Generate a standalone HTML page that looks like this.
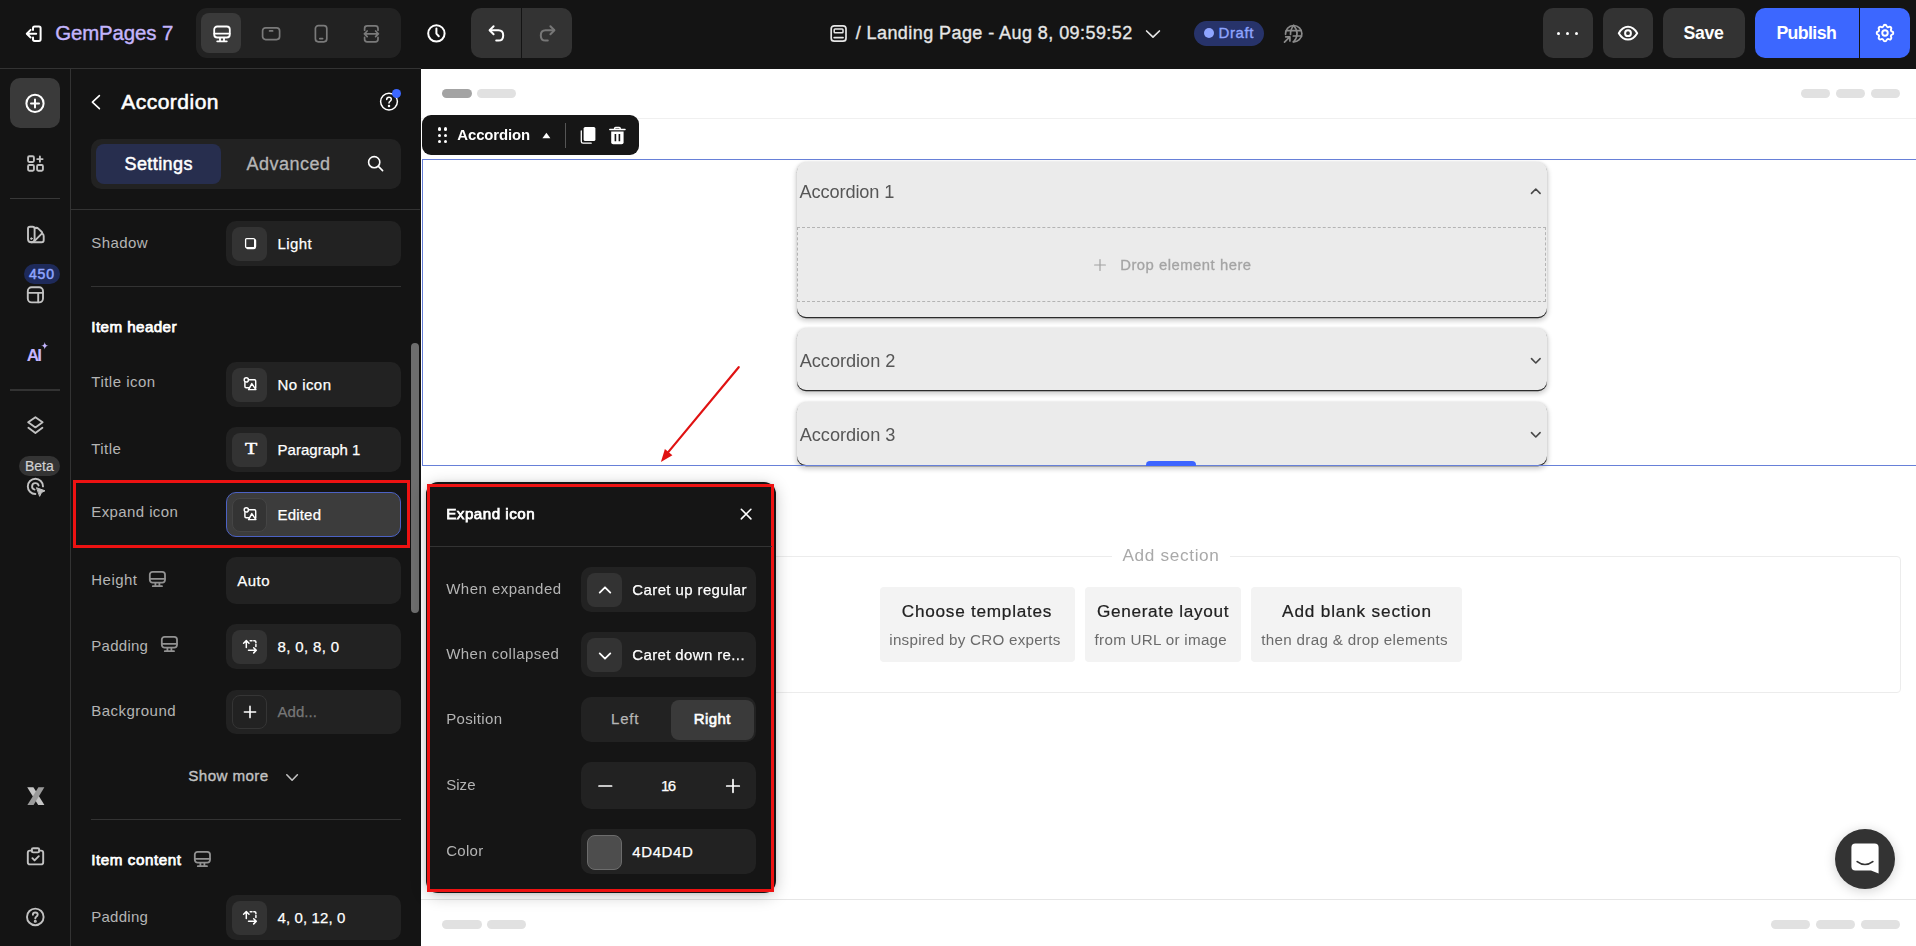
<!DOCTYPE html>
<html lang="en">
<head>
<meta charset="utf-8">
<title>GemPages 7 - Accordion</title>
<style>
*{box-sizing:border-box;margin:0;padding:0}
html,body{width:1916px;height:946px;overflow:hidden;background:#141414;font-family:"Liberation Sans",Arial,sans-serif;color:#fff}
.abs{position:absolute}
#app{position:relative;width:1916px;height:946px;overflow:hidden;background:#141414}
svg{display:block;overflow:visible}
.t{position:absolute;white-space:nowrap;line-height:1}
/* top bar */
#top{position:absolute;left:0;top:0;width:1916px;height:68px;background:#141414}
#topline{position:absolute;left:0;top:68px;width:421px;height:1px;background:#333}
.tbtn{position:absolute;top:8px;height:50px;border-radius:10px;background:#333}
/* rail */
#rail{position:absolute;left:0;top:69px;width:70px;height:877px;background:#141414}
#railline{position:absolute;left:70px;top:69px;width:1px;height:877px;background:#333}
/* panel */
#panel{position:absolute;left:71px;top:69px;width:349px;height:877px;background:#141414}
.lbl{position:absolute;left:91px;font-size:15px;color:#b8b8b8;white-space:nowrap;line-height:1}
.fld{position:absolute;left:226px;width:175px;height:44px;border-radius:10px;background:#232323}
.ibox{position:absolute;left:6px;top:5px;width:35px;height:34px;border-radius:8px;background:#333}
.fld .v{position:absolute;left:51px;top:14px;font-size:15px;color:#fff;white-space:nowrap;line-height:1}
.hr{position:absolute;left:91px;width:310px;height:1px;background:#333}
/* canvas */
#canvas{position:absolute;left:421px;top:69px;width:1495px;height:877px;background:#fff}
.pill{position:absolute;height:10px;border-radius:5px;background:#e3e3e3}
.acc{position:absolute;left:797px;width:749px;background:#ebebeb;border-radius:9px;border-bottom:2px solid #2a2a2a;box-shadow:0 3px 6px rgba(0,0,0,.22),0 0 3px rgba(0,0,0,.12)}
.acct{position:absolute;left:800px;font-size:19.5px;color:#4f4f4f;white-space:nowrap;line-height:1}
/* popup */
#pop{position:absolute;left:427px;top:483px;width:348px;height:410px;background:#141414;border:3px solid #e60012;border-radius:7px;box-shadow:0 4px 18px rgba(0,0,0,.25)}
.plbl{position:absolute;left:446px;font-size:15px;color:#b8b8b8;white-space:nowrap;line-height:1}
.pfld{position:absolute;left:581px;width:175px;height:44px;border-radius:10px;background:#232323}
</style>
</head>
<body>
<div id="app">

<!-- ================= TOP BAR ================= -->
<div id="top"></div>
<!-- exit icon -->
<svg class="abs" style="left:24px;top:23px" width="20" height="21" viewBox="0 0 20 21" fill="none" stroke="#fff" stroke-width="2" stroke-linecap="round" stroke-linejoin="round">
  <path d="M9 7V5.2Q9 3.6 10.6 3.6H15Q16.6 3.6 16.6 5.2V16.3Q16.6 17.9 15 17.9H10.6Q9 17.9 9 16.3V14.5"/>
  <path d="M12.2 10.7H3.2M6.6 6.9L2.8 10.7L6.6 14.5"/>
</svg>
<div class="t" style="left:55.2px;top:23px;font-size:20.4px;color:#c4b5fd;letter-spacing:-0.09px;-webkit-text-stroke:0.4px #c4b5fd;">GemPages 7</div>

<!-- device group -->
<div class="abs" style="left:196px;top:8px;width:205px;height:50px;border-radius:11px;background:#222"></div>
<div class="abs" style="left:201px;top:13px;width:40px;height:40px;border-radius:8px;background:#3a3a3a"></div>
<!-- desktop -->
<svg class="abs" style="left:211px;top:23px" width="22" height="22" viewBox="0 0 22 22" fill="none" stroke="#fff" stroke-width="1.8" stroke-linecap="round" stroke-linejoin="round">
  <rect x="3.2" y="3.5" width="15.6" height="11" rx="3"/>
  <path d="M3.4 10.6H18.6M9 14.8V18M13 14.8V18M6.2 18.3H15.8"/>
</svg>
<!-- tablet -->
<svg class="abs" style="left:260px;top:23px" width="22" height="22" viewBox="0 0 22 22" fill="none" stroke="#7a7a7a" stroke-width="1.7" stroke-linecap="round" stroke-linejoin="round">
  <rect x="2.6" y="4.8" width="17" height="11.8" rx="3"/>
  <path d="M9.6 7.9H12.6"/>
</svg>
<!-- mobile -->
<svg class="abs" style="left:310px;top:23px" width="22" height="22" viewBox="0 0 22 22" fill="none" stroke="#7a7a7a" stroke-width="1.7" stroke-linecap="round" stroke-linejoin="round">
  <rect x="5.4" y="2.6" width="11.4" height="16.2" rx="3"/>
  <path d="M9.8 15.6H12.6"/>
</svg>
<!-- fit -->
<svg class="abs" style="left:360px;top:23px" width="22" height="22" viewBox="0 0 22 22" fill="none" stroke="#7a7a7a" stroke-width="1.7" stroke-linecap="round" stroke-linejoin="round">
  <path d="M4.6 7.2V5.4Q4.6 2.8 7.2 2.8H15.4Q18 2.8 18 5.4V7.2M4.6 14.4V16.2Q4.6 18.8 7.2 18.8H15.4Q18 18.8 18 16.2V14.4"/>
  <path d="M4.4 10.8H18.4M7.2 8L4.4 10.8L7.2 13.6M15.6 8L18.4 10.8L15.6 13.6"/>
</svg>
<!-- clock -->
<svg class="abs" style="left:425px;top:22px" width="23" height="23" viewBox="0 0 23 23" fill="none" stroke="#fff" stroke-width="2" stroke-linecap="round" stroke-linejoin="round">
  <circle cx="11.4" cy="11.4" r="8.2"/>
  <path d="M11.4 6.6V11.6L13.8 14.2"/>
</svg>
<!-- undo/redo -->
<div class="abs" style="left:471px;top:8px;width:101px;height:50px;border-radius:10px;background:#333"></div>
<div class="abs" style="left:521px;top:8px;width:1px;height:50px;background:#141414"></div>
<svg class="abs" style="left:485px;top:22px" width="23" height="23" viewBox="0 0 23 23" fill="none" stroke="#fff" stroke-width="2" stroke-linecap="round" stroke-linejoin="round">
  <path d="M8.6 4.2L4.6 8.2L8.6 12.2"/>
  <path d="M5 8.2H13.4Q18.2 8.2 18.2 13.4Q18.2 18.6 13.4 18.6H11.2"/>
</svg>
<svg class="abs" style="left:536px;top:22px" width="23" height="23" viewBox="0 0 23 23" fill="none" stroke="#777" stroke-width="2" stroke-linecap="round" stroke-linejoin="round">
  <path d="M14.4 4.2L18.4 8.2L14.4 12.2"/>
  <path d="M18 8.2H9.6Q4.8 8.2 4.8 13.4Q4.8 18.6 9.6 18.6H11.8"/>
</svg>

<!-- center title -->
<svg class="abs" style="left:828px;top:23px" width="21" height="21" viewBox="0 0 21 21" fill="none" stroke="#e6e6e6" stroke-width="1.700" stroke-linecap="round" stroke-linejoin="round">
  <rect x="3.200" y="2.800" width="14.800" height="15.400" rx="3"/>
  <rect x="6.200" y="5.900" width="8.800" height="3.800" rx="0.800" stroke-width="1.500"/>
  <path d="M6.200 14.600H15" stroke-width="1.800"/>
</svg>
<div class="t" style="left:855.7px;top:24px;font-size:18px;color:#e6e6e6;letter-spacing:0.43px;-webkit-text-stroke:0.35px #e6e6e6;">/ Landing Page - Aug 8, 09:59:52</div>
<svg class="abs" style="left:1145px;top:28px" width="16" height="12" viewBox="0 0 16 12" fill="none" stroke="#e6e6e6" stroke-width="1.7" stroke-linecap="round" stroke-linejoin="round"><path d="M1.6 3L8 9.2L14.4 3"/></svg>
<!-- draft pill -->
<div class="abs" style="left:1194px;top:21px;width:70px;height:25px;border-radius:12.5px;background:#27336a"></div>
<div class="abs" style="left:1203.700px;top:28px;width:10.200px;height:10.200px;border-radius:5.100px;background:#8fa5ff"></div>
<div class="t" style="left:1218.5px;top:25px;font-size:15px;color:#8fa5ff;letter-spacing:0.6px;-webkit-text-stroke:0.35px #8fa5ff;">Draft</div>
<!-- globe -->
<svg class="abs" style="left:1282px;top:22px" width="23" height="23" viewBox="0 0 23 23" fill="none" stroke="#8a8a8a" stroke-width="1.700" stroke-linecap="round" stroke-linejoin="round">
  <path d="M3.500 12.300A8.200 8.200 0 1 1 11.200 19.900"/>
  <path d="M4.400 8.600H19.200M11.300 14H19.600"/>
  <path d="M11.700 3.500Q8.400 7.200 8.500 12.400M11.700 3.500Q15.100 7.500 15 11.700Q14.900 16.400 11.700 19.700"/>
  <path d="M2.500 20.200L7.500 15.200M3.700 14.800H7.900V19"/>
</svg>

<!-- right buttons -->
<div class="tbtn" style="left:1543px;width:50px"></div>
<div class="abs" style="left:1556.700px;top:31.700px;width:3px;height:3px;border-radius:2px;background:#fff"></div>
<div class="abs" style="left:1566.200px;top:31.700px;width:3px;height:3px;border-radius:2px;background:#fff"></div>
<div class="abs" style="left:1574.700px;top:31.700px;width:3px;height:3px;border-radius:2px;background:#fff"></div>
<div class="tbtn" style="left:1603px;width:50px"></div>
<svg class="abs" style="left:1616px;top:22px" width="24" height="22" viewBox="0 0 24 22" fill="none" stroke="#fff" stroke-width="2" stroke-linecap="round" stroke-linejoin="round">
  <path d="M2.8 11.2Q6.6 4.8 12 4.8Q17.4 4.8 21.2 11.2Q17.4 17.6 12 17.6Q6.600 17.6 2.8 11.2Z"/>
  <circle cx="12" cy="11.2" r="2.9"/>
</svg>
<div class="tbtn" style="left:1663px;width:82px"></div>
<div class="t" style="left:1683.5px;top:25px;font-size:17.7px;color:#fff;font-weight:bold;letter-spacing:-0.31px;">Save</div>
<div class="abs" style="left:1755px;top:8px;width:104px;height:50px;border-radius:10px 0 0 10px;background:#3c67ff"></div>
<div class="abs" style="left:1860px;top:8px;width:50px;height:50px;border-radius:0 10px 10px 0;background:#3c67ff"></div>
<div class="t" style="left:1776.4px;top:25px;font-size:17.7px;color:#fff;font-weight:bold;letter-spacing:-0.59px;">Publish</div>
<svg class="abs" style="left:1874px;top:22px" width="22" height="22" viewBox="0 0 24 24" fill="none" stroke="#fff" stroke-width="2.1" stroke-linecap="round" stroke-linejoin="round">
  <path d="M10.3 4.3c.4-1.8 3-1.8 3.4 0a1.7 1.7 0 0 0 2.600 1.100c1.500-.9 3.300.8 2.400 2.400a1.700 1.700 0 0 0 1 2.600c1.800.4 1.800 3 0 3.400a1.700 1.700 0 0 0-1 2.600c.9 1.500-.8 3.300-2.400 2.400a1.700 1.700 0 0 0-2.600 1c-.4 1.800-3 1.800-3.400 0a1.700 1.700 0 0 0-2.600-1c-1.500.9-3.300-.8-2.400-2.400a1.700 1.700 0 0 0-1-2.600c-1.800-.4-1.800-3 0-3.400a1.700 1.700 0 0 0 1-2.600c-.9-1.500.8-3.300 2.400-2.400 1 .6 2.300.1 2.600-1.100z"/>
  <circle cx="12" cy="12" r="3"/>
</svg>


<!-- ================= RAIL ================= -->
<div id="rail"></div>
<div id="railline"></div>
<div id="topline"></div>
<div class="abs" style="left:10px;top:78px;width:50px;height:50px;border-radius:10px;background:#3a3a3a"></div>
<svg class="abs" style="left:24px;top:92px" width="22" height="22" viewBox="0 0 22 22" fill="none" stroke="#fff" stroke-width="2" stroke-linecap="round"><circle cx="11" cy="11.400" r="8.600"/><path d="M11 7.400V15.400M7 11.400H15"/></svg>
<!-- widgets -->
<svg class="abs" style="left:25px;top:153px" width="22" height="22" viewBox="0 0 22 22" fill="none" stroke="#c2c2c2" stroke-width="1.900" stroke-linecap="round" stroke-linejoin="round">
  <rect x="3.100" y="3.300" width="5.800" height="5.700" rx="1.200"/><rect x="3.100" y="12" width="5.800" height="5.700" rx="1.200"/><rect x="12.100" y="12" width="5.800" height="5.700" rx="1.200"/>
  <path d="M14.900 3.500V8.800M12.200 6.100H17.600"/>
</svg>
<div class="abs" style="left:10px;top:198px;width:50px;height:1px;background:#383838"></div>
<!-- palette -->
<svg class="abs" style="left:25px;top:224px" width="22" height="22" viewBox="0 0 22 22" fill="none" stroke="#c2c2c2" stroke-width="1.900" stroke-linecap="round" stroke-linejoin="round">
  <path d="M5 2.800H7.600Q9.600 2.800 9.600 4.800V14.900Q9.600 18.200 6.300 18.200Q3 18.200 3 14.900V4.800Q3 2.800 5 2.800Z"/>
  <path d="M9.800 4L11.200 3.800Q12.600 3.800 13.600 4.800L16.800 8Q17.600 8.800 16.800 9.600L9.600 16.800"/>
  <path d="M17.400 9.600Q18.700 10.500 18.700 12V16.200Q18.700 18.200 16.700 18.200H6.300"/>
  <circle cx="6.400" cy="14.600" r="0.900" fill="#c2c2c2" stroke-width="0.800"/>
</svg>
<div class="abs" style="left:24px;top:264px;width:36.200px;height:20px;border-radius:10px;background:#1e2a5a"></div>
<div class="t" style="left:28.9px;top:267px;font-size:14px;color:#8fa5ff;letter-spacing:0.92px;-webkit-text-stroke:0.5px #8fa5ff;">450</div>
<!-- layout -->
<svg class="abs" style="left:25px;top:284px" width="22" height="22" viewBox="0 0 22 22" fill="none" stroke="#c2c2c2" stroke-width="1.900" stroke-linecap="round" stroke-linejoin="round">
  <rect x="2.800" y="3.200" width="15.200" height="15.200" rx="3.800"/><path d="M3 8.900H17.800M13.200 8.900V18.200"/>
</svg>
<!-- AI -->
<div class="t" style="left:26.7px;top:347px;font-size:17px;color:#c4b5fd;font-weight:bold;letter-spacing:-1.6px;">AI</div>
<svg class="abs" style="left:40.500px;top:342px" width="7.500" height="7.500" viewBox="0 0 10 10"><path d="M5 0Q5.400 4.600 10 5Q5.400 5.400 5 10Q4.600 5.400 0 5Q4.600 4.600 5 0Z" fill="#c4b5fd"/></svg>
<div class="abs" style="left:10px;top:389px;width:50px;height:2px;background:#333"></div>
<!-- layers -->
<svg class="abs" style="left:25px;top:414px" width="22" height="22" viewBox="0 0 22 22" fill="none" stroke="#c2c2c2" stroke-width="1.900" stroke-linecap="round" stroke-linejoin="round">
  <path d="M10.400 3.200L3.200 8.200L10.400 13.400L17.600 8.200Z"/><path d="M3.400 13.800L10.400 19L17.400 13.800"/>
</svg>
<div class="abs" style="left:19.300px;top:456px;width:41px;height:20px;border-radius:10px;background:#343434"></div>
<div class="t" style="left:25px;top:459px;font-size:14px;color:#d0d0d0;-webkit-text-stroke:0.2px #d0d0d0;">Beta</div>
<!-- target cursor -->
<svg class="abs" style="left:25px;top:476px" width="22" height="22" viewBox="0 0 22 22" fill="none" stroke="#c2c2c2" stroke-width="1.900" stroke-linecap="round" stroke-linejoin="round">
  <path d="M18 10.400A7.600 7.600 0 1 0 10.400 18"/>
  <path d="M13.600 9.600A3.300 3.300 0 1 0 9.600 13.600"/>
  <path d="M11.800 11.800L20 14.800L16.500 16.500L14.800 20Z" fill="#c2c2c2" stroke-width="1"/>
</svg>
<!-- X logo -->
<svg class="abs" style="left:26px;top:786px" width="20" height="20" viewBox="0 0 20 20">
  <path d="M1.200 1.200H7.400L18.400 19H12.200Z" fill="#c6c6c6"/>
  <path d="M12.400 1.200H18.400L7.600 19H1.400Z" fill="#9a9a9a"/>
</svg>
<!-- clipboard check -->
<svg class="abs" style="left:25px;top:846px" width="22" height="22" viewBox="0 0 22 22" fill="none" stroke="#c2c2c2" stroke-width="1.900" stroke-linecap="round" stroke-linejoin="round">
  <path d="M6.800 4.600H5Q2.800 4.600 2.800 6.800V16.200Q2.800 18.400 5 18.400H16Q18.200 18.400 18.200 16.200V6.800Q18.200 4.600 16 4.600H14.200"/>
  <rect x="6.800" y="2.200" width="7.400" height="4.200" rx="1.400"/>
  <path d="M7.400 12.200L9.600 14.400L13.800 10.200"/>
</svg>
<!-- help -->
<svg class="abs" style="left:24px;top:906px" width="22" height="22" viewBox="0 0 22 22" fill="none" stroke="#c2c2c2" stroke-width="1.900" stroke-linecap="round" stroke-linejoin="round">
  <circle cx="11.300" cy="10.900" r="8.300"/>
  <path d="M8.900 8.800Q8.900 6.500 11.300 6.500Q13.700 6.500 13.700 8.600Q13.700 10 12.300 10.700Q11.300 11.300 11.300 12.400"/>
  <circle cx="11.300" cy="15.200" r="0.600" fill="#c9c9c9"/>
</svg>


<!-- ================= PANEL ================= -->
<div id="panel"></div>
<svg class="abs" style="left:88px;top:93px" width="16" height="18" viewBox="0 0 16 18" fill="none" stroke="#fff" stroke-width="1.6" stroke-linecap="round" stroke-linejoin="round"><path d="M11.400 2.600L4.400 9.100L11.400 15.600"/></svg>
<div class="t" style="left:121.2px;top:91px;font-size:21px;color:#fff;letter-spacing:0.49px;-webkit-text-stroke:0.55px #fff;">Accordion</div>
<svg class="abs" style="left:378px;top:91px" width="22" height="22" viewBox="0 0 22 22" fill="none" stroke="#fff" stroke-width="1.5" stroke-linecap="round" stroke-linejoin="round"><circle cx="11" cy="10.600" r="8.400"/><path d="M8.700 8.600Q8.700 6.300 11 6.300Q13.300 6.300 13.300 8.300Q13.300 9.700 12 10.400Q11 11 11 12"/><circle cx="11" cy="14.900" r="0.500" fill="#fff"/></svg>
<div class="abs" style="left:391.8px;top:88.8px;width:9px;height:9px;background:#3c67ff;border-radius:4.5px;"></div>
<div class="abs" style="left:91px;top:139px;width:310px;height:49.5px;background:#222;border-radius:10px;"></div>
<div class="abs" style="left:96px;top:144px;width:125px;height:40px;background:#272e4e;border-radius:8px;"></div>
<div class="t" style="left:124.5px;top:155px;font-size:18px;color:#fff;letter-spacing:0.42px;-webkit-text-stroke:0.5px #fff;">Settings</div>
<div class="t" style="left:246.5px;top:155px;font-size:18px;color:#b6b6b6;letter-spacing:0.49px;-webkit-text-stroke:0.3px #b6b6b6;">Advanced</div>
<svg class="abs" style="left:365px;top:153px" width="22" height="22" viewBox="0 0 22 22" fill="none" stroke="#fff" stroke-width="1.6" stroke-linecap="round" stroke-linejoin="round"><circle cx="9.200" cy="9.200" r="5.600"/><path d="M13.400 13.400L17.600 17.600"/></svg>
<div class="abs" style="left:71px;top:209px;width:349px;height:1px;background:#333;"></div>
<div class="t" style="left:91.3px;top:235px;font-size:15px;color:#b4b4b4;letter-spacing:0.4px;">Shadow</div>
<div class="abs" style="left:226px;top:221px;width:175px;height:44.5px;background:#222;border-radius:10px;"></div>
<div class="abs" style="left:232px;top:226.5px;width:35px;height:34px;background:#333;border-radius:8px;"></div>
<svg class="abs" style="left:242px;top:235px" width="17" height="17" viewBox="0 0 17 17" fill="none" stroke="#fff" stroke-width="1.5" stroke-linecap="round" stroke-linejoin="round"><path d="M4.600 3.600H11.400Q12.800 3.600 12.800 5V11.400Q12.800 12.800 11.400 12.800H5Q3.600 12.800 3.600 11.400V4.600Q3.600 3.600 4.600 3.600Z" stroke-width="1.300"/><path d="M13.100 5.400V11.400Q13.100 13.100 11.400 13.100H5.400" stroke-width="2.200"/></svg>
<div class="t" style="left:277.5px;top:236px;font-size:15px;color:#fff;letter-spacing:0.42px;-webkit-text-stroke:0.25px #fff;">Light</div>
<div class="abs" style="left:91px;top:286px;width:310px;height:1px;background:#333;"></div>
<div class="t" style="left:91.3px;top:319px;font-size:15.2px;color:#fff;letter-spacing:0.42px;-webkit-text-stroke:0.75px #fff;">Item header</div>
<div class="t" style="left:91.3px;top:374px;font-size:15px;color:#b4b4b4;letter-spacing:0.48px;">Title icon</div>
<div class="abs" style="left:226px;top:362px;width:175px;height:44.5px;background:#222;border-radius:10px;"></div>
<div class="abs" style="left:232px;top:367.5px;width:35px;height:34px;background:#333;border-radius:8px;"></div>
<svg class="abs" style="left:241.5px;top:376px" width="16" height="16" viewBox="0 0 16 16" fill="none" stroke="#fff" stroke-width="1.45" stroke-linecap="round" stroke-linejoin="round"><circle cx="4.3" cy="3.9" r="2.1"/><path d="M7 3.8H12.6Q13.700 3.800 13.700 4.900V12M2.900 6.500V10.600Q2.900 11.800 4.100 11.800H6.600"/><path d="M9.800 7.600L6.600 13.600H13.900Z"/></svg>
<div class="t" style="left:277.5px;top:377px;font-size:15px;color:#fff;letter-spacing:0.44px;-webkit-text-stroke:0.25px #fff;">No icon</div>
<div class="t" style="left:91.3px;top:441px;font-size:15px;color:#b4b4b4;letter-spacing:0.43px;">Title</div>
<div class="abs" style="left:226px;top:427px;width:175px;height:44.5px;background:#222;border-radius:10px;"></div>
<div class="abs" style="left:232px;top:432.5px;width:35px;height:34px;background:#333;border-radius:8px;"></div>
<div class="t" style="left:244.7px;top:441px;font-size:16.4px;color:#fff;font-family:'Liberation Serif',serif;-webkit-text-stroke:0.5px #fff;transform:scaleX(1.22);transform-origin:0 0;">T</div>
<div class="t" style="left:277.5px;top:442px;font-size:15px;color:#fff;letter-spacing:0.04px;-webkit-text-stroke:0.25px #fff;">Paragraph 1</div>
<div class="t" style="left:91.3px;top:504px;font-size:15px;color:#b4b4b4;letter-spacing:0.4px;">Expand icon</div>
<div class="abs" style="left:226px;top:492px;width:175px;height:44.5px;background:#3c3c3c;border-radius:10px;border:1px solid #4c62c4;"></div>
<div class="abs" style="left:232px;top:497.5px;width:35px;height:34px;background:#343434;border-radius:8px;border:1px solid #454545;"></div>
<svg class="abs" style="left:241.5px;top:506.3px" width="16" height="16" viewBox="0 0 16 16" fill="none" stroke="#fff" stroke-width="1.45" stroke-linecap="round" stroke-linejoin="round"><circle cx="4.3" cy="3.9" r="2.1"/><path d="M7 3.8H12.6Q13.700 3.800 13.700 4.900V12M2.900 6.500V10.600Q2.900 11.800 4.100 11.800H6.600"/><path d="M9.800 7.600L6.600 13.600H13.900Z"/></svg>
<div class="t" style="left:277.5px;top:507px;font-size:15px;color:#fff;letter-spacing:0.19px;-webkit-text-stroke:0.25px #fff;">Edited</div>
<div class="abs" style="left:73px;top:479.800px;width:336.700px;height:68.200px;border:3.400px solid #ee1212"></div>
<div class="t" style="left:91.3px;top:572px;font-size:15px;color:#b4b4b4;letter-spacing:0.47px;">Height</div>
<svg class="abs" style="left:148px;top:569.6px" width="19" height="19" viewBox="0 0 19 19" fill="none" stroke="#929292" stroke-width="1.8" stroke-linecap="round" stroke-linejoin="round"><rect x="1.800" y="1.800" width="15.200" height="10.800" rx="2.800"/><path d="M2 8.800H16.800M7.400 12.800V15.800M11.400 12.800V15.800M4.800 16.200H14"/></svg>
<div class="abs" style="left:226px;top:557px;width:175px;height:47px;background:#222;border-radius:10px;"></div>
<div class="t" style="left:237.3px;top:573px;font-size:15px;color:#fff;letter-spacing:0.48px;-webkit-text-stroke:0.25px #fff;">Auto</div>
<div class="t" style="left:91.3px;top:638px;font-size:15px;color:#b4b4b4;letter-spacing:0.27px;">Padding</div>
<svg class="abs" style="left:160.4px;top:635.2px" width="19" height="19" viewBox="0 0 19 19" fill="none" stroke="#929292" stroke-width="1.8" stroke-linecap="round" stroke-linejoin="round"><rect x="1.800" y="1.800" width="15.200" height="10.800" rx="2.800"/><path d="M2 8.800H16.800M7.400 12.800V15.800M11.400 12.800V15.800M4.800 16.200H14"/></svg>
<div class="abs" style="left:226px;top:624px;width:175px;height:44.5px;background:#222;border-radius:10px;"></div>
<div class="abs" style="left:232px;top:629.5px;width:35px;height:34px;background:#333;border-radius:8px;"></div>
<svg class="abs" style="left:242px;top:637.8px" width="17" height="17" viewBox="0 0 17 17" fill="none" stroke="#fff" stroke-width="1.5" stroke-linecap="round" stroke-linejoin="round"><path d="M4.300 9.600V2.700M1.600 5.200L4.300 2.500L7 5.200"/><path d="M6.500 12.300H14.200M11.700 9.700L14.300 12.300L11.700 14.900"/><path d="M8.200 2.800H10M11.800 2.800H12.600Q13.900 2.800 13.900 4.100V4.700M13.900 6.600V8.500"/></svg>
<div class="t" style="left:277.5px;top:639px;font-size:15px;color:#fff;letter-spacing:0.35px;-webkit-text-stroke:0.25px #fff;">8, 0, 8, 0</div>
<div class="t" style="left:91.3px;top:703px;font-size:15px;color:#b4b4b4;letter-spacing:0.47px;">Background</div>
<div class="abs" style="left:226px;top:689.5px;width:175px;height:44.5px;background:#222;border-radius:10px;"></div>
<div class="abs" style="left:232px;top:695px;width:35px;height:34px;background:#222;border-radius:8px;border:1px solid #353535;"></div>
<svg class="abs" style="left:242px;top:704px" width="16" height="16" viewBox="0 0 16 16" fill="none" stroke="#fff" stroke-width="1.6" stroke-linecap="round" stroke-linejoin="round"><path d="M8 2.400V13.600M2.400 8H13.600"/></svg>
<div class="t" style="left:277.5px;top:704px;font-size:15px;color:#777;letter-spacing:0.06px;-webkit-text-stroke:0.25px #777;">Add...</div>
<div class="t" style="left:188.3px;top:768px;font-size:15.2px;color:#c2c2c2;letter-spacing:0.38px;-webkit-text-stroke:0.35px #c2c2c2;">Show more</div>
<svg class="abs" style="left:284px;top:770px" width="16" height="14" viewBox="0 0 16 14" fill="none" stroke="#c2c2c2" stroke-width="1.6" stroke-linecap="round" stroke-linejoin="round"><path d="M2.800 4.800L8.100 10.200L13.400 4.800"/></svg>
<div class="abs" style="left:91px;top:819px;width:310px;height:1px;background:#333;"></div>
<div class="t" style="left:91.2px;top:852px;font-size:15.2px;color:#fff;letter-spacing:0.56px;-webkit-text-stroke:0.75px #fff;">Item content</div>
<svg class="abs" style="left:192.6px;top:849.6px" width="19" height="19" viewBox="0 0 19 19" fill="none" stroke="#929292" stroke-width="1.8" stroke-linecap="round" stroke-linejoin="round"><rect x="1.800" y="1.800" width="15.200" height="10.800" rx="2.800"/><path d="M2 8.800H16.800M7.400 12.800V15.800M11.400 12.800V15.800M4.800 16.200H14"/></svg>
<div class="t" style="left:91.2px;top:909px;font-size:15px;color:#b4b4b4;letter-spacing:0.27px;">Padding</div>
<div class="abs" style="left:226px;top:895.3px;width:175px;height:44.5px;background:#222;border-radius:10px;"></div>
<div class="abs" style="left:232px;top:900.8px;width:35px;height:34px;background:#333;border-radius:8px;"></div>
<svg class="abs" style="left:242px;top:909.3px" width="17" height="17" viewBox="0 0 17 17" fill="none" stroke="#fff" stroke-width="1.5" stroke-linecap="round" stroke-linejoin="round"><path d="M4.300 9.600V2.700M1.600 5.200L4.300 2.500L7 5.200"/><path d="M6.500 12.300H14.200M11.700 9.700L14.300 12.300L11.700 14.900"/><path d="M8.200 2.800H10M11.800 2.800H12.600Q13.900 2.800 13.900 4.100V4.700M13.900 6.600V8.500"/></svg>
<div class="t" style="left:277.5px;top:910px;font-size:15px;color:#fff;letter-spacing:0.11px;-webkit-text-stroke:0.25px #fff;">4, 0, 12, 0</div>
<div class="abs" style="left:411px;top:343px;width:8px;height:270px;background:#6e6e6e;border-radius:4px;"></div>

<!-- ================= CANVAS ================= -->
<div id="canvas"></div>
<div class="abs" style="left:0;top:0;width:1916px;height:946px;will-change:transform">
<div class="abs" style="left:441.5px;top:88.5px;width:30px;height:9.5px;background:#a3a3a3;border-radius:5px;"></div>
<div class="abs" style="left:477px;top:88.5px;width:39px;height:9.5px;background:#e1e1e1;border-radius:5px;"></div>
<div class="abs" style="left:1800.5px;top:88.5px;width:29.5px;height:9.5px;background:#e1e1e1;border-radius:5px;"></div>
<div class="abs" style="left:1835.5px;top:88.5px;width:29.5px;height:9.5px;background:#e1e1e1;border-radius:5px;"></div>
<div class="abs" style="left:1870.5px;top:88.5px;width:29.5px;height:9.5px;background:#e1e1e1;border-radius:5px;"></div>
<div class="abs" style="left:421px;top:118px;width:1495px;height:1px;background:#f0f0f0;"></div>
<div class="abs" style="left:796.500px;top:161.5px;width:750px;height:155.2px;background:#ebebeb;border-radius:9px;box-shadow:0 1.200px 0 0 #2b2b2b,0 3px 5px 1px rgba(0,0,0,.2),0 0 3px rgba(0,0,0,.1)"></div>
<div class="abs" style="left:796.500px;top:328.3px;width:750px;height:62.2px;background:#ebebeb;border-radius:9px;box-shadow:0 1.200px 0 0 #2b2b2b,0 3px 5px 1px rgba(0,0,0,.2),0 0 3px rgba(0,0,0,.1)"></div>
<div class="abs" style="left:796.500px;top:402.2px;width:750px;height:62.8px;background:#ebebeb;border-radius:9px;box-shadow:0 1.200px 0 0 #2b2b2b,0 3px 5px 1px rgba(0,0,0,.2),0 0 3px rgba(0,0,0,.1)"></div>
<div class="t" style="left:799.6px;top:183px;font-size:18.2px;color:#565656;letter-spacing:-0.13px;">Accordion 1</div>
<div class="t" style="left:799.7px;top:352px;font-size:18.2px;color:#565656;letter-spacing:-0.04px;">Accordion 2</div>
<div class="t" style="left:799.7px;top:426px;font-size:18.2px;color:#565656;letter-spacing:-0.04px;">Accordion 3</div>
<svg class="abs" style="left:1529px;top:185px" width="14" height="12" viewBox="0 0 14 12" fill="none" stroke="#484848" stroke-width="1.6" stroke-linecap="round" stroke-linejoin="round"><path d="M2.500 8.400L6.800 4L11.100 8.400"/></svg>
<svg class="abs" style="left:1529px;top:355px" width="14" height="12" viewBox="0 0 14 12" fill="none" stroke="#484848" stroke-width="1.6" stroke-linecap="round" stroke-linejoin="round"><path d="M2.500 3.600L6.800 8L11.100 3.600"/></svg>
<svg class="abs" style="left:1529px;top:429.3px" width="14" height="12" viewBox="0 0 14 12" fill="none" stroke="#484848" stroke-width="1.6" stroke-linecap="round" stroke-linejoin="round"><path d="M2.500 3.600L6.800 8L11.100 3.600"/></svg>
<div class="abs" style="left:796.500px;top:227px;width:749.500px;height:74.500px;border:1px dashed #b4b4b4"></div>
<svg class="abs" style="left:1093px;top:257.7px" width="14" height="14" viewBox="0 0 14 14" fill="none" stroke="#a2a2a2" stroke-width="1.2" stroke-linecap="round" stroke-linejoin="round"><path d="M7 1.600V12.400M1.600 7H12.400"/></svg>
<div class="t" style="left:1120.2px;top:258px;font-size:14.8px;color:#a4a4a4;letter-spacing:0.52px;-webkit-text-stroke:0.3px #a4a4a4;">Drop element here</div>
<div class="abs" style="left:422px;top:159px;width:1500px;height:307px;border:1px solid #6780d8"></div>
<div class="abs" style="left:1146px;top:461px;width:50px;height:5px;background:#3c64ff;border-radius:4px 4px 0 0;"></div>
<div class="abs" style="left:422px;top:115.3px;width:216.5px;height:39.6px;background:#161616;border-radius:9px;"></div>
<div class="abs" style="left:437.8px;top:127.4px;width:3.4px;height:3.4px;background:#fff;border-radius:2px;"></div>
<div class="abs" style="left:437.8px;top:133.7px;width:3.4px;height:3.4px;background:#fff;border-radius:2px;"></div>
<div class="abs" style="left:437.8px;top:139.9px;width:3.4px;height:3.4px;background:#fff;border-radius:2px;"></div>
<div class="abs" style="left:444.1px;top:127.4px;width:3.4px;height:3.4px;background:#fff;border-radius:2px;"></div>
<div class="abs" style="left:444.1px;top:133.7px;width:3.4px;height:3.4px;background:#fff;border-radius:2px;"></div>
<div class="abs" style="left:444.1px;top:139.9px;width:3.4px;height:3.4px;background:#fff;border-radius:2px;"></div>
<div class="t" style="left:457.3px;top:128px;font-size:14.9px;color:#fff;font-weight:bold;letter-spacing:-0.1px;">Accordion</div>
<svg class="abs" style="left:542px;top:132px" width="9" height="7" viewBox="0 0 9 7"><path d="M4.400 0.800L8.400 6.300H0.400Z" fill="#fff"/></svg>
<div class="abs" style="left:565px;top:123.2px;width:1.4px;height:25px;background:#555;"></div>
<svg class="abs" style="left:580px;top:126px" width="17" height="19" viewBox="0 0 17 19"><path d="M5.200 1H13.800Q15.400 1 15.400 2.600V13.400Q15.400 15 13.800 15H5.200Q3.600 15 3.600 13.400V2.600Q3.600 1 5.200 1Z" fill="#fff"/><path d="M1.300 4.800V15.400Q1.300 17.200 3.100 17.200H11.200" fill="none" stroke="#fff" stroke-width="1.300" stroke-linecap="round"/></svg>
<svg class="abs" style="left:609px;top:125.500px" width="17" height="19" viewBox="0 0 17 19"><path d="M0.800 3.600H16M5.600 3.400V2.400Q5.600 1.400 6.600 1.400H10.200Q11.200 1.400 11.200 2.400V3.400" fill="none" stroke="#fff" stroke-width="1.500" stroke-linecap="round"/><path d="M2.200 5.400H14.600V16.200Q14.600 18.200 12.600 18.200H4.200Q2.200 18.200 2.200 16.200Z" fill="#fff"/><path d="M6.400 8V15.200M10.400 8V15.200" stroke="#161616" stroke-width="1.600" fill="none"/></svg>
<svg class="abs" style="left:650px;top:360px" width="100" height="110" viewBox="650 360 100 110"><path d="M738.700 367.200L667 453.600" stroke="#e01212" stroke-width="2.200" stroke-linecap="round" fill="none"/><path d="M660.900 462L664.900 449L672.400 455.300Z" fill="#e01212"/></svg>
<div class="abs" style="left:437px;top:556px;width:1463.500px;height:136.500px;border:1px solid #ececec;border-radius:4px"></div>
<div class="abs" style="left:1112px;top:550px;width:118px;height:14px;background:#fff;"></div>
<div class="t" style="left:1122.4px;top:547px;font-size:17.2px;color:#a9a9a9;letter-spacing:0.67px;">Add section</div>
<div class="abs" style="left:879.5px;top:587px;width:195.4px;height:74.5px;background:#f3f3f3;border-radius:4px;"></div>
<div class="t" style="left:901.8px;top:603px;font-size:17.2px;color:#212121;letter-spacing:0.74px;-webkit-text-stroke:0.22px #212121;">Choose templates</div>
<div class="t" style="left:889.3px;top:632px;font-size:15.2px;color:#6b6b6b;letter-spacing:0.25px;">inspired by CRO experts</div>
<div class="abs" style="left:1085.2px;top:587px;width:155.4px;height:74.5px;background:#f3f3f3;border-radius:4px;"></div>
<div class="t" style="left:1097px;top:603px;font-size:17.2px;color:#212121;letter-spacing:0.65px;-webkit-text-stroke:0.22px #212121;">Generate layout</div>
<div class="t" style="left:1094.6px;top:632px;font-size:15.2px;color:#6b6b6b;letter-spacing:0.28px;">from URL or image</div>
<div class="abs" style="left:1251.2px;top:587px;width:211.2px;height:74.5px;background:#f3f3f3;border-radius:4px;"></div>
<div class="t" style="left:1282.1px;top:603px;font-size:17.2px;color:#212121;letter-spacing:0.83px;-webkit-text-stroke:0.22px #212121;">Add blank section</div>
<div class="t" style="left:1261.2px;top:632px;font-size:15.2px;color:#6b6b6b;letter-spacing:0.31px;">then drag &amp; drop elements</div>
<div class="abs" style="left:421px;top:898.5px;width:1495px;height:1px;background:#e6e6e6;"></div>
<div class="abs" style="left:442px;top:919.7px;width:39.5px;height:9.8px;background:#e1e1e1;border-radius:5px;"></div>
<div class="abs" style="left:486.7px;top:919.7px;width:39.5px;height:9.8px;background:#e1e1e1;border-radius:5px;"></div>
<div class="abs" style="left:1771px;top:919.7px;width:39.3px;height:9.8px;background:#e1e1e1;border-radius:5px;"></div>
<div class="abs" style="left:1816px;top:919.7px;width:39.3px;height:9.8px;background:#e1e1e1;border-radius:5px;"></div>
<div class="abs" style="left:1861px;top:919.7px;width:39.3px;height:9.8px;background:#e1e1e1;border-radius:5px;"></div>
<div class="abs" style="left:1835px;top:829px;width:60px;height:60px;background:#333;border-radius:30px;box-shadow:0 2px 12px rgba(0,0,0,.18);"></div>
<svg class="abs" style="left:1850px;top:842px" width="30" height="33" viewBox="0 0 30 33"><path d="M5.400 1.400H24.600Q28.600 1.400 28.600 5.400V31.600L21 28.400H5.400Q1.400 28.400 1.400 24.400V5.400Q1.400 1.400 5.400 1.400Z" fill="#fff"/><path d="M7.200 19.600Q15 25.400 22.800 19.600" stroke="#333" stroke-width="1.700" fill="none" stroke-linecap="round"/></svg>
</div>

<!-- ================= POPUP ================= -->
<div class="abs" style="left:426px;top:482.3px;width:350px;height:411.2px;background:#151515;border-radius:12px;box-shadow:0 3px 16px rgba(0,0,0,.22),0 0 4px rgba(0,0,0,.12);"></div>
<div class="abs" style="left:427px;top:483.700px;width:347.300px;height:408.300px;border:3.200px solid #ee1212"></div>
<div class="t" style="left:446.2px;top:506px;font-size:15.2px;color:#fff;letter-spacing:0.49px;-webkit-text-stroke:0.75px #fff;">Expand icon</div>
<svg class="abs" style="left:738px;top:506px" width="16" height="16" viewBox="0 0 16 16" fill="none" stroke="#fff" stroke-width="1.6" stroke-linecap="round" stroke-linejoin="round"><path d="M3.300 3.300L12.900 12.900M12.900 3.300L3.300 12.900"/></svg>
<div class="abs" style="left:430.2px;top:546px;width:341.6px;height:1px;background:#333;"></div>
<div class="t" style="left:446.2px;top:581px;font-size:15px;color:#b4b4b4;letter-spacing:0.47px;">When expanded</div>
<div class="abs" style="left:581.3px;top:567.3px;width:174.7px;height:44.5px;background:#222;border-radius:10px;"></div>
<div class="abs" style="left:587px;top:573px;width:35px;height:34px;background:#333;border-radius:8px;"></div>
<svg class="abs" style="left:596.7px;top:582px" width="16" height="16" viewBox="0 0 16 16" fill="none" stroke="#fff" stroke-width="1.8" stroke-linecap="round" stroke-linejoin="round"><path d="M2.700 10.600L8 5.300L13.300 10.600"/></svg>
<div class="t" style="left:632.3px;top:582px;font-size:15px;color:#fff;letter-spacing:0.39px;-webkit-text-stroke:0.25px #fff;">Caret up regular</div>
<div class="t" style="left:446.2px;top:646px;font-size:15px;color:#b4b4b4;letter-spacing:0.46px;">When collapsed</div>
<div class="abs" style="left:581.3px;top:632.3px;width:174.7px;height:44.5px;background:#222;border-radius:10px;"></div>
<div class="abs" style="left:587px;top:638px;width:35px;height:34px;background:#333;border-radius:8px;"></div>
<svg class="abs" style="left:596.7px;top:648px" width="16" height="16" viewBox="0 0 16 16" fill="none" stroke="#fff" stroke-width="1.8" stroke-linecap="round" stroke-linejoin="round"><path d="M2.700 5.400L8 10.700L13.300 5.400"/></svg>
<div class="t" style="left:632.3px;top:647px;font-size:15px;color:#fff;letter-spacing:0.37px;-webkit-text-stroke:0.25px #fff;">Caret down re...</div>
<div class="t" style="left:446.2px;top:711px;font-size:15px;color:#b4b4b4;letter-spacing:0.35px;">Position</div>
<div class="abs" style="left:581.3px;top:697.2px;width:174.7px;height:44.5px;background:#222;border-radius:10px;"></div>
<div class="abs" style="left:671px;top:700.2px;width:83px;height:39.5px;background:#3a3a3a;border-radius:8px;"></div>
<div class="t" style="left:611.1px;top:711px;font-size:15px;color:#b6b6b6;letter-spacing:0.73px;-webkit-text-stroke:0.25px #b6b6b6;">Left</div>
<div class="t" style="left:693.7px;top:711px;font-size:15px;color:#fff;letter-spacing:0.42px;-webkit-text-stroke:0.6px #fff;">Right</div>
<div class="t" style="left:446.2px;top:777px;font-size:15px;color:#b4b4b4;letter-spacing:0.04px;">Size</div>
<div class="abs" style="left:581.3px;top:762px;width:174.7px;height:47px;background:#222;border-radius:10px;"></div>
<svg class="abs" style="left:596.6px;top:777.5px" width="16" height="16" viewBox="0 0 16 16" fill="none" stroke="#fff" stroke-width="1.7" stroke-linecap="round" stroke-linejoin="round"><path d="M2 8H14.600"/></svg>
<div class="t" style="left:660.9px;top:778px;font-size:15px;color:#fff;letter-spacing:-1.59px;-webkit-text-stroke:0.25px #fff;">16</div>
<svg class="abs" style="left:724.5px;top:777.5px" width="16" height="16" viewBox="0 0 16 16" fill="none" stroke="#fff" stroke-width="1.7" stroke-linecap="round" stroke-linejoin="round"><path d="M8 1.700V14.300M1.700 8H14.300"/></svg>
<div class="t" style="left:446.2px;top:843px;font-size:15px;color:#b4b4b4;letter-spacing:0.29px;">Color</div>
<div class="abs" style="left:581.3px;top:829.3px;width:174.7px;height:44.5px;background:#222;border-radius:10px;"></div>
<div class="abs" style="left:587px;top:834.5px;width:35px;height:35px;background:#4d4d4d;border-radius:8px;border:1px solid #6c6c6c;"></div>
<div class="t" style="left:632.3px;top:844px;font-size:15px;color:#fff;letter-spacing:0.59px;-webkit-text-stroke:0.25px #fff;">4D4D4D</div>

</div>
</body>
</html>
